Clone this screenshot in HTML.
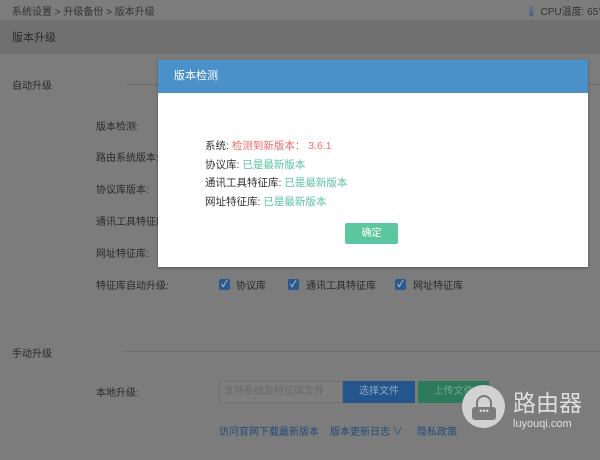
<!DOCTYPE html>
<html><head><meta charset="utf-8"><style>
*{margin:0;padding:0;box-sizing:border-box}
body{width:600px;height:460px;overflow:hidden;background:#7c7c7c;font-family:"Liberation Sans","Noto Sans CJK SC",sans-serif;font-size:10px;color:#2a2a2a;position:relative}
.a{position:absolute;white-space:nowrap}
.cb{position:absolute;width:11px;height:11px;background:#2a5b8f;border-radius:2px;color:#ddd;font-size:9px;line-height:11px;text-align:center}
</style></head><body>
<div class="a" style="left:12px;top:3px;color:#333">系统设置 &gt; 升级备份 &gt; 版本升级</div>
<div class="a" style="left:525px;top:3px;color:#333"><span style="color:#2a5b8f">🌡</span> CPU温度: 65°C</div>
<div class="a" style="left:0;top:20px;width:600px;height:34px;background:#707070"></div>
<div class="a" style="left:12px;top:29px;color:#2a2a2a;font-size:11px">版本升级</div>
<div class="a" style="left:12px;top:77px">自动升级</div>
<div class="a" style="left:125px;top:84px;width:475px;height:1px;background:#6c6c6c"></div>
<div class="a" style="left:96px;top:118px">版本检测:</div>
<div class="a" style="left:96px;top:149px">路由系统版本:</div>
<div class="a" style="left:96px;top:181px">协议库版本:</div>
<div class="a" style="left:96px;top:213px">通讯工具特征库</div>
<div class="a" style="left:96px;top:245px">网址特征库:</div>
<div class="a" style="left:96px;top:277px">特征库自动升级:</div>
<div class="cb" style="left:219px;top:279px">✓</div><div class="a" style="left:236px;top:277px">协议库</div>
<div class="cb" style="left:288px;top:279px">✓</div><div class="a" style="left:306px;top:277px">通讯工具特征库</div>
<div class="cb" style="left:395px;top:279px">✓</div><div class="a" style="left:413px;top:277px">网址特征库</div>
<div class="a" style="left:12px;top:345px">手动升级</div>
<div class="a" style="left:123px;top:351px;width:477px;height:1px;background:#6c6c6c"></div>
<div class="a" style="left:96px;top:384px">本地升级:</div>
<div class="a" style="left:219px;top:381px;width:124px;height:22px;background:#7e7e7e;border:1px solid #727272;color:#6a6a6a;padding:4px 4px;line-height:12px">支持系统及特征库文件</div>
<div class="a" style="left:343px;top:381px;width:72px;height:22px;background:#23568c;color:#8fa6c0;text-align:center;line-height:22px">选择文件</div>
<div class="a" style="left:418px;top:381px;width:71px;height:22px;background:#2e7a5c;color:#6fa58c;text-align:center;line-height:22px">上传文件</div>
<div class="a" style="left:219px;top:423px;color:#214c7c">访问官网下载最新版本</div>
<div class="a" style="left:330px;top:423px;color:#214c7c">版本更新日志 ∨</div>
<div class="a" style="left:417px;top:423px;color:#214c7c">隐私政策</div>
<div class="a" style="left:462px;top:385px;width:43px;height:43px;border-radius:50%;background:#d2d2d2"></div>
<div class="a" style="left:472px;top:407px;width:24px;height:13px;border-radius:3px;background:#7c7c7c;color:#ddd;font-size:9px;line-height:9px;text-align:center">•••</div>
<div class="a" style="left:476px;top:395px;width:16px;height:16px;border:2px solid #7c7c7c;border-bottom:none;border-radius:10px 10px 0 0"></div>
<div class="a" style="left:513px;top:390px;color:#dedede;font-size:23px;line-height:26px">路由器</div>
<div class="a" style="left:513px;top:418px;color:#dedede;font-size:11px">luyouqi.com</div>
<div class="a" style="left:158px;top:60px;width:430px;height:207px;background:#fff;box-shadow:0 1px 3px rgba(0,0,0,.3)">
<div style="height:33px;background:#4a90c9;color:#fff;font-size:11px;line-height:33px;padding-left:16px">版本检测</div>
<div class="a" style="left:47px;top:77px;color:#333;font-size:10.5px;line-height:18.5px">系统: <span style="color:#f06a6a">检测到新版本： 3.6.1</span><br>协议库: <span style="color:#5cc39f">已是最新版本</span><br>通讯工具特征库: <span style="color:#5cc39f">已是最新版本</span><br>网址特征库: <span style="color:#5cc39f">已是最新版本</span></div>
<div class="a" style="left:187px;top:163px;width:53px;height:21px;background:#5bc6a0;color:#fff;text-align:center;line-height:21px;border-radius:2px">确定</div>
</div>
</body></html>
